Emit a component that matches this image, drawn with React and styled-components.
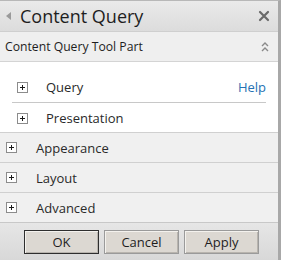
import React from 'react';
import styled, { createGlobalStyle } from 'styled-components';

const GlobalStyle = createGlobalStyle`
  html, body {
    margin: 0;
    padding: 0;
    background: #ffffff;
  }
  body {
    font-family: "Open Sans", "DejaVu Sans", sans-serif;
  }
`;

const Panel = styled.div`
  width: 281px;
  height: 260px;
  box-sizing: border-box;
  border-top: 1px solid #b8b8b8;
  border-right: 3px solid #a8a8a8;
  display: flex;
  flex-direction: column;
  background: #f0f0f0;
  overflow: hidden;
`;

const TitleBar = styled.div`
  height: 30px;
  display: flex;
  align-items: center;
  padding: 0 8px 0 4px;
  background: linear-gradient(to bottom, #eaeaea 0%, #dcdcdc 100%);
  border-bottom: 1px solid #cfcfcf;
`;

const BackArrow = styled.span`
  width: 0;
  height: 0;
  border-top: 4px solid transparent;
  border-bottom: 4px solid transparent;
  border-right: 5px solid #9a9a9a;
  margin: 0 9px 0 2px;
`;

const Title = styled.h1`
  flex: 1;
  margin: 0;
  font-weight: 400;
  font-size: 18px;
  color: #1e1e1e;
  line-height: 30px;
`;

const IconButton = styled.span`
  display: flex;
  color: #6a6a6a;
`;

const ToolHeader = styled.div`
  height: 29px;
  display: flex;
  align-items: center;
  padding: 0 8px 0 5px;
  background: #efefef;
  border-bottom: 1px solid #d4d4d4;
`;

const ToolTitle = styled.div`
  flex: 1;
  font-size: 12.2px;
  color: #1e1e1e;
`;

const Body = styled.div`
  background: #ffffff;
  padding: 10px 12px 0 12px;
  height: 60px;
  border-bottom: 1px solid #d0d0d0;
`;

const SubRow = styled.div`
  height: 30px;
  display: flex;
  align-items: center;
  padding-left: 5px;
  border-bottom: ${(p) => (p.$lined ? '1px solid #c8c8c8' : 'none')};
`;

const PlusBox = styled.span`
  width: 11px;
  height: 11px;
  box-sizing: border-box;
  border: 1px solid #8c8c8c;
  background: #ffffff;
  position: relative;
  flex: none;

  &::before,
  &::after {
    content: '';
    position: absolute;
    background: #1a1a1a;
  }
  &::before {
    left: 2px;
    top: 4px;
    width: 5px;
    height: 1px;
  }
  &::after {
    left: 4px;
    top: 2px;
    width: 1px;
    height: 5px;
  }
`;

const Label = styled.span`
  flex: 1;
  font-size: 13px;
  color: #2a2a2a;
  margin-left: ${(p) => p.$indent}px;
`;

const HelpLink = styled.a`
  font-size: 13px;
  color: #2472b4;
  text-decoration: none;
`;

const Section = styled.div`
  height: 29px;
  display: flex;
  align-items: center;
  padding-left: 6px;
  background: #f0f0f0;
  border-bottom: ${(p) => (p.$last ? 'none' : '1px solid #d0d0d0')};
`;

const Footer = styled.div`
  flex: 1;
  display: flex;
  align-items: center;
  justify-content: flex-start;
  gap: 5px;
  padding-left: 24px;
  background: linear-gradient(to bottom, #e6e6e6 0%, #d8d8d8 100%);
  border-top: 1px solid #c8c8c8;
`;

const Button = styled.button`
  width: 75px;
  height: 24px;
  font-family: "Open Sans", "DejaVu Sans", sans-serif;
  font-size: 13px;
  color: #1e1e1e;
  background: #dcd8d2;
  border: 1px solid ${(p) => (p.$primary ? '#2e2e2e' : '#9a9a9a')};
  box-shadow: inset 1px 1px 0 #f4f2ee, inset -1px -1px 0 #b8b4ae;
  padding: 0;
`;

const CloseIcon = () => (
  <svg width="12" height="12" viewBox="0 0 12 12">
    <path d="M2 2 L10 10 M10 2 L2 10" stroke="#6a6a6a" strokeWidth="2.2" strokeLinecap="round" />
  </svg>
);

const CollapseIcon = () => (
  <svg width="10" height="12" viewBox="0 0 10 12">
    <path d="M2 5 L5 2 L8 5 M2 10 L5 7 L8 10" stroke="#8a8a8a" strokeWidth="1.4" fill="none" />
  </svg>
);

const App = () => (
  <>
    <GlobalStyle />
    <Panel>
      <TitleBar>
        <BackArrow />
        <Title>Content Query</Title>
        <IconButton>
          <CloseIcon />
        </IconButton>
      </TitleBar>
      <ToolHeader>
        <ToolTitle>Content Query Tool Part</ToolTitle>
        <IconButton>
          <CollapseIcon />
        </IconButton>
      </ToolHeader>
      <Body>
        <SubRow $lined>
          <PlusBox />
          <Label $indent={18}>Query</Label>
          <HelpLink href="#">Help</HelpLink>
        </SubRow>
        <SubRow>
          <PlusBox />
          <Label $indent={18}>Presentation</Label>
        </SubRow>
      </Body>
      <Section>
        <PlusBox />
        <Label $indent={19}>Appearance</Label>
      </Section>
      <Section>
        <PlusBox />
        <Label $indent={19}>Layout</Label>
      </Section>
      <Section $last>
        <PlusBox />
        <Label $indent={19}>Advanced</Label>
      </Section>
      <Footer>
        <Button $primary>OK</Button>
        <Button>Cancel</Button>
        <Button>Apply</Button>
      </Footer>
    </Panel>
  </>
);

export default App;
